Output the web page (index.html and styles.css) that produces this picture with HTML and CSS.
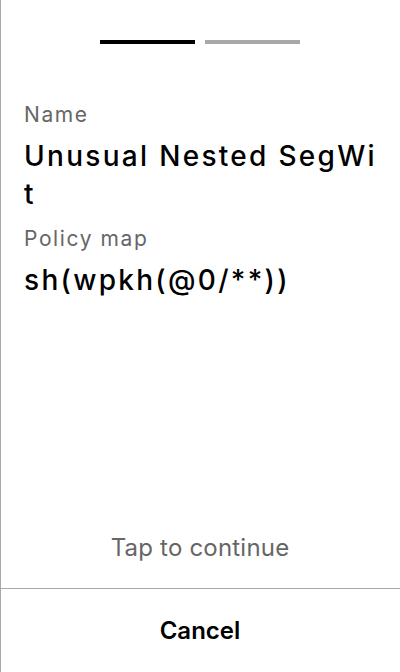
FILE: index.html
```html
<!DOCTYPE html>
<html>
<head>
<meta charset="utf-8">
<link rel="stylesheet" href="styles.css">
</head>
<body>
<div class="screen">
  <div class="progress">
    <div class="bar bar-active"></div>
    <div class="bar bar-inactive"></div>
  </div>
  <div class="content">
    <div class="label">Name</div>
    <div class="value">Unusual Nested SegWit</div>
    <div class="label">Policy map</div>
    <div class="value">sh(wpkh(@0/**))</div>
  </div>
  <div class="tap">Tap to continue</div>
  <div class="footer">Cancel</div>
</div>
</body>
</html>
```
FILE: styles.css
```css
html, body {
  margin: 0;
  padding: 0;
  background: #fff;
}
body {
  font-family: Inter, "Noto Sans", sans-serif;
}
.screen {
  width: 400px;
  height: 672px;
  box-sizing: border-box;
  box-shadow: inset 1px 0 0 #a8a8a8;
  display: flex;
  flex-direction: column;
}
.progress {
  display: flex;
  justify-content: center;
  gap: 10px;
  padding-top: 40px;
}
.bar {
  width: 95px;
  height: 4px;
}
.bar-active { background: #000; }
.bar-inactive { background: #a8a8a8; }
.content {
  padding: 57px 16px 0 24px;
  flex: 1;
}
.label {
  font-size: 21px;
  line-height: 28px;
  letter-spacing: 1.6px;
  color: #666;
}
.value {
  font-size: 28px;
  line-height: 38px;
  font-weight: 500;
  letter-spacing: 2.3px;
  color: #000;
  word-break: break-all;
  margin: 8px 0 12px 0;
}
.tap {
  text-align: center;
  font-size: 24px;
  line-height: 32px;
  letter-spacing: 0.2px;
  color: #666;
  padding-bottom: 24px;
}
.footer {
  box-shadow: inset 1px 0 0 #a8a8a8, inset 0 1px 0 #a8a8a8;
  height: 84px;
  display: flex;
  align-items: center;
  justify-content: center;
  font-size: 24px;
  font-weight: 600;
  color: #000;
}
```
